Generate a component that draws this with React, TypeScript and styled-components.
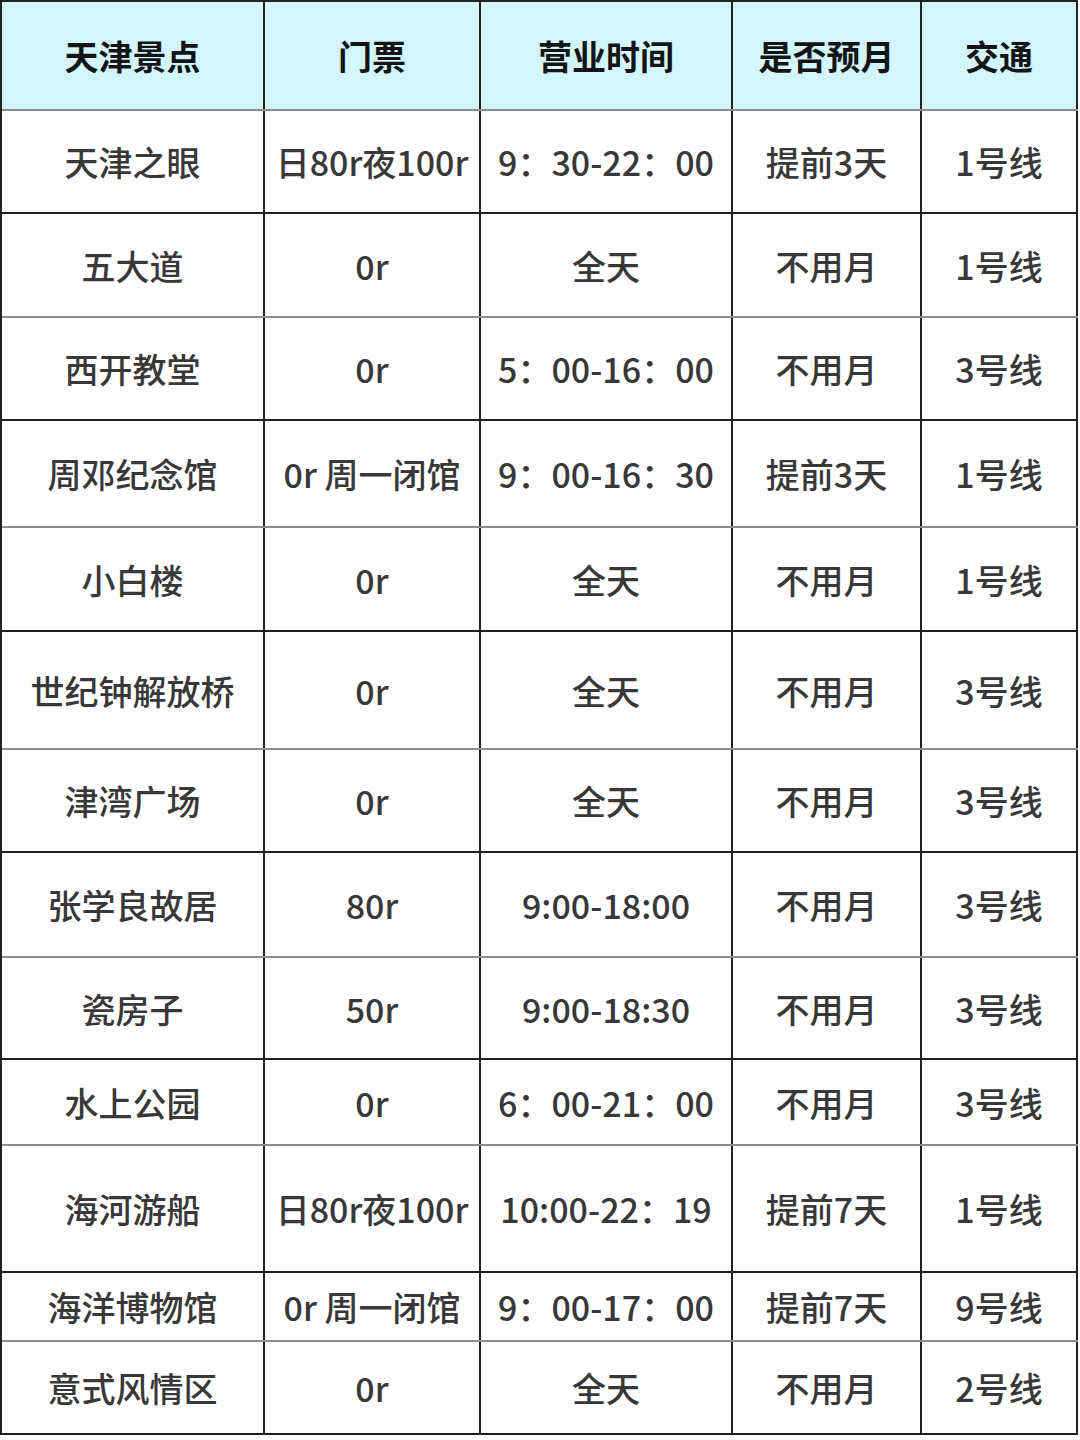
import React from "react";
import styled, { createGlobalStyle } from "styled-components";

const GlobalStyle = createGlobalStyle`
  html, body {
    margin: 0;
    padding: 0;
    background: #ffffff;
  }
  body {
    font-family: "Noto Sans CJK SC", "Noto Sans", sans-serif;
  }
`;

/* --- Styled Components --- */

const Page = styled.div`
  width: 1080px;
  height: 1440px;
  background: #ffffff;
  box-sizing: border-box;
`;

const Table = styled.div`
  width: 1078px;
  display: flex;
  flex-direction: column;
  border-top: 2px solid #222;
  border-left: 2px solid #222;
  box-sizing: border-box;
`;

interface RowProps {
  $height: number;
  $line: "dark" | "gray";
  $head?: boolean;
}

const Row = styled.div<RowProps>`
  display: grid;
  grid-template-columns: 263px 216px 252px 189px 156px;
  height: ${(p) => p.$height}px;
  box-sizing: border-box;
  border-bottom: 2px solid ${(p) => (p.$line === "dark" ? "#1f1f1f" : "#8c8c8c")};
  background: ${(p) => (p.$head ? "#d3f6fc" : "#ffffff")};
`;

interface CellProps {
  $head?: boolean;
}

const Cell = styled.div<CellProps>`
  display: flex;
  align-items: center;
  justify-content: center;
  border-right: 2px solid #222;
  box-sizing: border-box;
  font-size: 34px;
  white-space: nowrap;
  letter-spacing: 0;
  font-weight: ${(p) => (p.$head ? 700 : 500)};
  color: ${(p) => (p.$head ? "#141414" : "#383838")};
  overflow: visible;
`;

/* --- Data --- */

const header = ["天津景点", "门票", "营业时间", "是否预月", "交通"];

const rows: { h: number; cells: string[] }[] = [
  { h: 103, cells: ["天津之眼", "日80r夜100r", "9：30-22：00", "提前3天", "1号线"] },
  { h: 104, cells: ["五大道", "0r", "全天", "不用月", "1号线"] },
  { h: 103, cells: ["西开教堂", "0r", "5：00-16：00", "不用月", "3号线"] },
  { h: 107, cells: ["周邓纪念馆", "0r 周一闭馆", "9：00-16：30", "提前3天", "1号线"] },
  { h: 104, cells: ["小白楼", "0r", "全天", "不用月", "1号线"] },
  { h: 118, cells: ["世纪钟解放桥", "0r", "全天", "不用月", "3号线"] },
  { h: 103, cells: ["津湾广场", "0r", "全天", "不用月", "3号线"] },
  { h: 105, cells: ["张学良故居", "80r", "9:00-18:00", "不用月", "3号线"] },
  { h: 102, cells: ["瓷房子", "50r", "9:00-18:30", "不用月", "3号线"] },
  { h: 86, cells: ["水上公园", "0r", "6：00-21：00", "不用月", "3号线"] },
  { h: 127, cells: ["海河游船", "日80r夜100r", "10:00-22：19", "提前7天", "1号线"] },
  { h: 69, cells: ["海洋博物馆", "0r 周一闭馆", "9：00-17：00", "提前7天", "9号线"] },
  { h: 93, cells: ["意式风情区", "0r", "全天", "不用月", "2号线"] },
];

/* --- Component --- */

const App: React.FC = () => {
  return (
    <Page>
      <GlobalStyle />
      <Table>
        <Row $height={109} $line="gray" $head>
          {header.map((t) => (
            <Cell key={t} $head>
              {t}
            </Cell>
          ))}
        </Row>
        {rows.map((r, i) => (
          <Row key={r.cells[0]} $height={r.h} $line={i % 2 === 0 ? "dark" : "gray"}>
            {r.cells.map((c, j) => (
              <Cell key={j}>{c}</Cell>
            ))}
          </Row>
        ))}
      </Table>
    </Page>
  );
};

export default App;
